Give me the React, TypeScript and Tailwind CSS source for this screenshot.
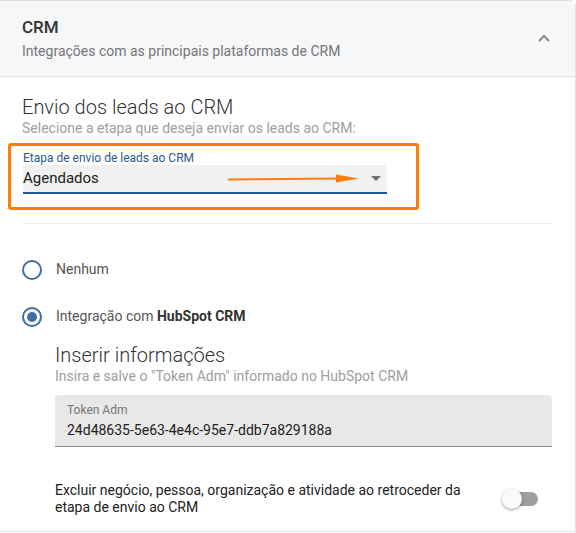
import React from 'react';

const font = { fontFamily: 'Roboto, "Liberation Sans", sans-serif' };

function Radio({ checked }: { checked: boolean }) {
  return (
    <span className="flex h-[20px] w-[20px] items-center justify-center rounded-full border-2 border-[#3d70a8]">
      {checked && <span className="h-[10px] w-[10px] rounded-full bg-[#3d70a8]" />}
    </span>
  );
}

function OrangeArrow() {
  return (
    <svg width="132" height="10" viewBox="0 0 132 10" className="absolute left-[205px] top-[9px]">
      <line x1="0" y1="5.5" x2="112" y2="4.5" stroke="#ff7f0e" strokeWidth="2" />
      <polygon points="108,0.5 131,4.5 108,8.5" fill="#ff7f0e" />
    </svg>
  );
}

const App: React.FC = () => {
  return (
    <div className="h-[533px] w-[576px] overflow-hidden bg-white" style={font}>
      <div className="rounded-tr-[6px] border-r border-t border-b border-[#e0e0e0] bg-white">
        {/* header */}
        <div className="flex h-[76px] items-center justify-between border-b border-[#e0e0e0] bg-[#f6f7f9] pl-[22px] pr-[24px]">
          <div className="-mt-[2px]">
            <div className="text-[17px] font-medium leading-[22px] text-[#333]">CRM</div>
            <div className="mt-[4px] text-[14px] leading-[18px] text-[#757575]">
              Integrações com as principais plataformas de CRM
            </div>
          </div>
          <svg width="14" height="10" viewBox="0 0 14 10" className="mb-[1px]">
            <polyline points="2,8 7,3 12,8" fill="none" stroke="#8a8a8a" strokeWidth="2" />
          </svg>
        </div>

        {/* body */}
        <div className="pb-[15px]">
          <div className="px-[22px] pt-[18px]">
            <div className="text-[20px] font-light leading-[24px] text-[#333]">Envio dos leads ao CRM</div>
            <div className="text-[14px] leading-[18px] text-[#9e9e9e]">Selecione a etapa que deseja enviar os leads ao CRM:</div>
          </div>

          <div className="ml-[8px] mt-[6px] h-[67px] w-[411px] rounded-[3px] border-[3px] border-[#ff8000] pl-[12px] pt-[5px]">
            <div className="text-[12px] leading-[14px] text-[#2b5a8a]">Etapa de envio de leads ao CRM</div>
            <div className="relative flex h-[29px] w-[364px] items-center justify-between border-b-2 border-[#1f5a96] bg-[#f1f1f1] pr-[6px]">
              <span className="text-[15px] text-[#222]">Agendados</span>
              <OrangeArrow />
              <svg width="10" height="6" viewBox="0 0 10 6">
                <polygon points="0,0 10,0 5,5" fill="#707070" />
              </svg>
            </div>
          </div>

          <div className="mx-[22px] mt-[13px] border-t border-[#eeeeee]" />

          <div className="mt-[35px] flex items-center gap-[14px] pl-[22px]">
            <Radio checked={false} />
            <span className="text-[14px] text-[#555]">Nenhum</span>
          </div>
          <div className="mt-[26px] flex items-center gap-[14px] pl-[22px]">
            <Radio checked />
            <span className="text-[14px] text-[#555]">
              Integração com <b className="font-bold text-[#333]">HubSpot CRM</b>
            </span>
          </div>

          <div className="pl-[55px] pr-[23px] pt-[16px]">
            <div className="text-[20px] font-light leading-[24px] text-[#333]">Inserir informações</div>
            <div className="text-[14px] leading-[18px] text-[#9e9e9e]">Insira e salve o "Token Adm" informado no HubSpot CRM</div>

            <div className="mt-[10px] h-[52px] rounded-t-[4px] border-b border-[#8a8a8a] bg-[#e8e8e8] px-[12px] pt-[8px]">
              <div className="text-[12px] leading-[14px] text-[#757575]">Token Adm</div>
              <div className="mt-[4px] text-[14px] leading-[18px] text-[#222]">24d48635-5e63-4e4c-95e7-ddb7a829188a</div>
            </div>

            <div className="mt-[35px] flex items-center justify-between pr-[14px]">
              <div className="w-[410px] text-[14px] leading-[17px] text-[#222]">
                Excluir negócio, pessoa, organização e atividade ao retroceder da etapa de envio ao CRM
              </div>
              <div className="relative h-[14px] w-[30px] rounded-full bg-[#9e9e9e]">
                <span className="absolute left-[-6px] top-[-3px] h-[20px] w-[20px] rounded-full bg-[#fafafa] shadow-[0_1px_3px_rgba(0,0,0,0.4)]" />
              </div>
            </div>
          </div>
        </div>
      </div>
    </div>
  );
};

export default App;
